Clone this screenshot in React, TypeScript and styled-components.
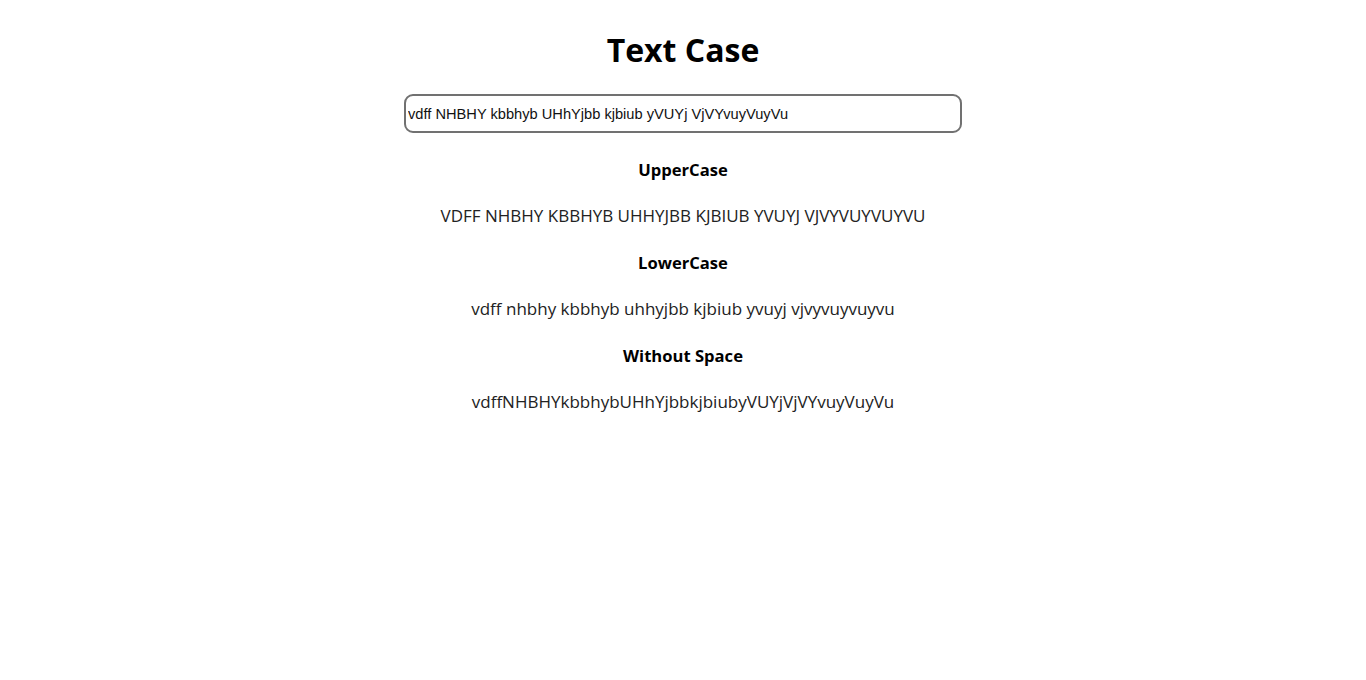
import React, { useState } from "react";
import styled, { createGlobalStyle } from "styled-components";

const Global = createGlobalStyle`
  body { margin: 8px; font-family: "Open Sans", "Noto Sans", sans-serif; background: #fff; color: #000; }
`;

const Page = styled.div`
  display: flex;
  flex-direction: column;
  align-items: center;
`;

const Title = styled.h1`
  font-size: 32px;
  font-weight: 700;
  margin: 22px 0 24px;
  line-height: 40px;
`;

const Input = styled.input`
  width: 558px;
  height: 39px;
  box-sizing: border-box;
  border: 2px solid #717171;
  border-radius: 9px;
  padding: 0 2px;
  font-family: "Liberation Sans", Arial, sans-serif;
  font-size: 14.65px;
  color: #111;
  background: #fff;
  outline: none;
`;

const Results = styled.div`
  display: flex;
  flex-direction: column;
  align-items: center;
  padding-top: 2px;
`;

const Heading = styled.h3`
  font-size: 16.6px;
  font-weight: 700;
  margin: 24px 0 0;
  line-height: 22px;
`;

const Result = styled.p`
  font-size: 17px;
  font-weight: 400;
  color: #222;
  margin: 23px 0 0;
  line-height: 24px;
`;

export default function App() {
  const [text, setText] = useState("vdff NHBHY kbbhyb UHhYjbb kjbiub yVUYj VjVYvuyVuyVu");
  return (
    <Page>
      <Global />
      <Title>Text Case</Title>
      <Input value={text} onChange={(e) => setText(e.target.value)} />
      <Results>
        <Heading>UpperCase</Heading>
        <Result>{text.toUpperCase()}</Result>
        <Heading>LowerCase</Heading>
        <Result>{text.toLowerCase()}</Result>
        <Heading>Without Space</Heading>
        <Result>{text.replace(/\s/g, "")}</Result>
      </Results>
    </Page>
  );
}
